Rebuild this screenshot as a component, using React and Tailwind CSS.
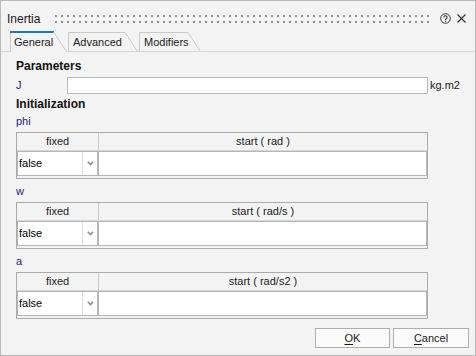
import React from "react";

const font = { fontFamily: '"Liberation Sans", Arial, sans-serif' };

const HelpIcon = () => (
  <svg width="11" height="11" viewBox="0 0 11 11" className="mt-[1px] ml-[10px] shrink-0">
    <circle cx="5.5" cy="5.5" r="4.8" fill="none" stroke="#333" strokeWidth="1" />
    <path d="M3.9 4.4a1.6 1.6 0 1 1 2.3 1.4c-0.5 0.3-0.7 0.6-0.7 1.1" fill="none" stroke="#333" strokeWidth="1.1" />
    <rect x="4.9" y="7.6" width="1.2" height="1.2" fill="#333" />
  </svg>
);

const CloseIcon = () => (
  <svg width="9" height="9" viewBox="0 0 9 9" className="mt-[2px] ml-[6px] shrink-0">
    <path d="M0.5 0.5L8.5 8.5M8.5 0.5L0.5 8.5" stroke="#333" strokeWidth="1.1" />
  </svg>
);

const Tab = ({ label, width, topRight, active }) => (
  <div className="relative h-[21px] shrink-0" style={{ width }}>
    <svg width={width} height="21" className="absolute inset-0">
      {active ? (
        <>
          <path d="M0.5 21V1.5" stroke="#c9c9c9" fill="none" />
          <rect x="0" y="0" width={topRight + 1} height="2" fill="#1a78c2" />
          <path d={`M${topRight + 0.5} 1L${width - 1.5} 20.5`} stroke="#c9c9c9" fill="none" />
          <path d={`M${width - 2} 20.5H${width}`} stroke="#d4d4d4" fill="none" />
        </>
      ) : (
        <>
          <path d={`M0.5 21V1.5H${topRight}L${width - 0.5} 20.5`} stroke="#c9c9c9" fill="none" />
          <path d={`M0 20.5H${width}`} stroke="#d4d4d4" fill="none" />
        </>
      )}
    </svg>
    <span className={`relative block pt-[5px] leading-[13px] text-[11px] text-[#1a1a1a] ${active ? "pl-[4px]" : "pl-[5px]"}`}>
      {label}
    </span>
  </div>
);

const ParamTable = ({ unit }) => (
  <div className="mt-[4px] w-[412px] border border-[#ababab]">
    <div className="flex h-[18px] border-b border-[#d6d6d6] text-[#1a1a1a]">
      <div className="w-[82px] border-r border-[#cacaca] text-center leading-[17px]">fixed</div>
      <div className="flex-1 text-center leading-[17px]">start ( {unit} )</div>
    </div>
    <div className="flex h-[25px] mb-[2px]">
      <div className="flex w-[81px] border border-[#b5b5b5] bg-white">
        <span className="flex-1 pl-[1px] leading-[23px] text-black">false</span>
        <div className="flex w-[15px] items-center justify-center border-l border-[#dedede]">
          <svg width="7" height="5" viewBox="0 0 7 5">
            <path d="M0.8 0.8L3.5 3.6L6.2 0.8" stroke="#8a8a8a" strokeWidth="1.5" fill="none" />
          </svg>
        </div>
      </div>
      <div className="flex-1 border border-[#b5b5b5] bg-white" />
    </div>
  </div>
);

const Label = ({ children, className }) => (
  <div className={`leading-[13px] text-[11px] text-[#1c1c78] ${className}`}>{children}</div>
);

export default function App() {
  return (
    <div
      className="flex h-[356px] w-[476px] flex-col overflow-hidden border border-[#b8b8b8] bg-[#f3f3f3] text-[11px]"
      style={font}
    >
      {/* title bar */}
      <div className="flex h-[30px] items-start pt-[11px] pl-[6px] pr-[9px]">
        <span className="text-[12px] leading-[15px] text-[#1a1a1a]">Inertia</span>
        <svg height="8" className="mt-[3px] ml-[15px] flex-1">
          <defs>
            <pattern id="grip" width="6" height="6" patternUnits="userSpaceOnUse">
              <rect width="2" height="2" fill="#8f8f8f" />
            </pattern>
          </defs>
          <rect width="100%" height="8" fill="url(#grip)" />
        </svg>
        <HelpIcon />
        <CloseIcon />
      </div>

      {/* tabs */}
      <div className="flex h-[21px]">
        <div className="w-[9px] border-b border-[#d4d4d4]" />
        <Tab label="General" width={58} topRight={43} active />
        <Tab label="Advanced" width={70} topRight={57} />
        <div className="w-[1px] border-b border-[#d4d4d4]" />
        <Tab label="Modifiers" width={62} topRight={49} />
        <div className="flex-1 border-b border-[#d4d4d4]" />
      </div>

      {/* content */}
      <div className="flex flex-1 flex-col pl-[15px]">
        <div className="mt-[7px] text-[12px] font-bold leading-[14px] text-[#111]">Parameters</div>
        <div className="mt-[4px] flex h-[17px] items-center">
          <span className="w-[51px] text-[#1c1c78]">J</span>
          <div className="h-[17px] w-[361px] border border-[#bababa] bg-white" />
          <span className="ml-[2px] text-[#1a1a1a]">kg.m2</span>
        </div>
        <div className="mt-[3px] text-[12px] font-bold leading-[14px] text-[#111]">Initialization</div>

        <Label className="mt-[4px]">phi</Label>
        <ParamTable unit="rad" />

        <Label className="mt-[6px]">w</Label>
        <ParamTable unit="rad/s" />

        <Label className="mt-[6px]">a</Label>
        <ParamTable unit="rad/s2" />

        <div className="mt-[9px] flex justify-end gap-[3px] pr-[6px]">
          <button className="h-[20px] w-[75px] border border-[#adadad] bg-[#fbfbfb] text-[11px] text-[#1a1a1a]">
            <span className="underline underline-offset-2">O</span>K
          </button>
          <button className="h-[20px] w-[76px] border border-[#adadad] bg-[#fbfbfb] text-[11px] text-[#1a1a1a]">
            <span className="underline underline-offset-2">C</span>ancel
          </button>
        </div>
      </div>
    </div>
  );
}
